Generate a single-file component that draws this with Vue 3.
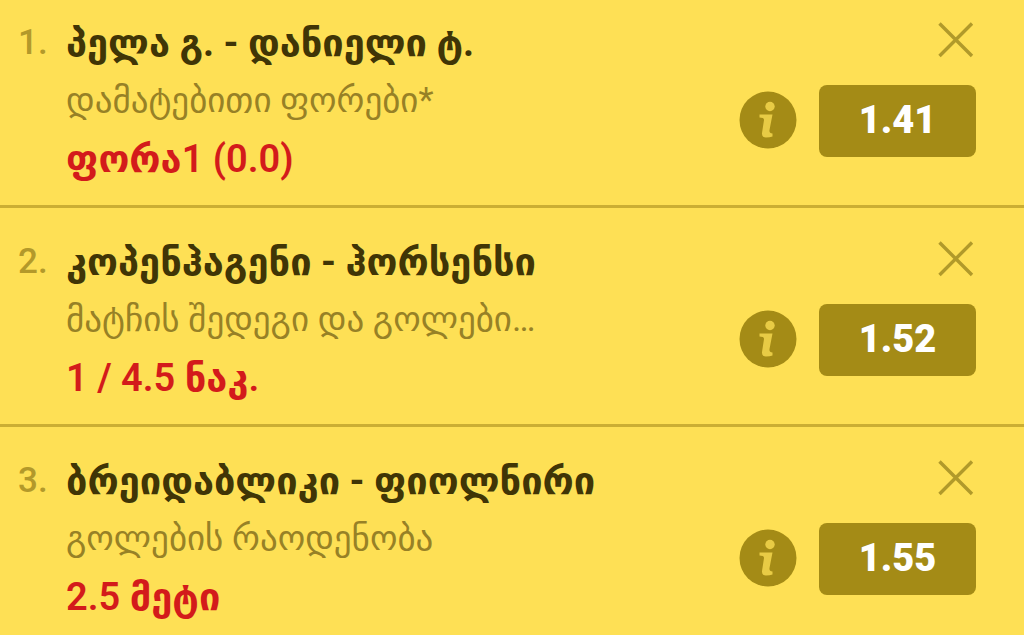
<script setup>
const bets = [
  { title: 'პელა გ. - დანიელი ტ.', market: 'დამატებითი ფორები*', pick: 'ფორა1 (0.0)', odds: '1.41' },
  { title: 'კოპენჰაგენი - ჰორსენსი', market: 'მატჩის შედეგი და გოლები…', pick: '1 / 4.5 ნაკ.', odds: '1.52' },
  { title: 'ბრეიდაბლიკი - ფიოლნირი', market: 'გოლების რაოდენობა', pick: '2.5 მეტი', odds: '1.55' },
]
</script>

<template>
  <ol class="slip">
    <li v-for="(bet, i) in bets" :key="bet.title" class="bet">
      <span class="num">{{ i + 1 }}.</span>
      <div class="info">
        <h2 class="title">{{ bet.title }}</h2>
        <p class="market">{{ bet.market }}</p>
        <p class="pick">{{ bet.pick }}</p>
      </div>
      <div class="side">
        <button class="close" type="button" aria-label="Remove">
          <svg viewBox="0 0 36 36" width="36" height="36"><path d="M1.5 1.5 34 34M34 1.5 1.5 34" fill="none" stroke="#b19a2a" stroke-width="3.4" /></svg>
        </button>
        <div class="actions">
          <button class="about" type="button" aria-label="Info">
            <svg viewBox="0 0 58 58" width="58" height="58">
              <circle cx="29" cy="29" r="28.5" fill="#a48b16" />
              <g fill="#e8cb45">
                <circle cx="31" cy="15.5" r="4.7" />
                <path d="M20.5 23.500H33.500L30.500 39Q30 42.500 33.500 42.500V45.500Q31 46.500 27 46.500Q22.500 46.500 23 42L25 29Q25.300 26.500 20.500 26.500Z" />
              </g>
            </svg>
          </button>
          <button class="odds" type="button">{{ bet.odds }}</button>
        </div>
      </div>
    </li>
  </ol>
</template>

<style>
body { margin: 0; background: #fee055; }
</style>

<style scoped>
.slip { margin: 0; padding: 0; list-style: none; font-family: Roboto, "DejaVu Sans", sans-serif; }
.bet { display: flex; padding: 11px 0 13px; border-bottom: 3px solid #cbae33; }
.bet:first-child { padding-top: 0; }
.bet:last-child { padding-bottom: 0; border-bottom: 0; }
.num { width: 66px; box-sizing: border-box; padding: 23px 0 0 18px; font-size: 35px; line-height: 40px; font-weight: 500; color: #b3992a; }
.info { flex: 1; min-width: 0; white-space: nowrap; }
.title, .market, .pick { margin: 0; height: 58px; line-height: 58px; }
.title { padding-top: 14px; font-size: 38px; font-weight: 700; color: #403506; }
.market { font-size: 35px; color: #978126; }
.pick { height: 62px; font-size: 38px; font-weight: 600; color: #d31b1b; }
.side { display: flex; flex-direction: column; align-items: flex-end; padding: 22px 48px 0 0; }
button { border: 0; padding: 0; background: none; font: inherit; cursor: pointer; }
svg { display: block; }
.close { margin-right: 2px; }
.actions { display: flex; align-items: center; gap: 22px; margin-top: 27px; }
.about { padding-bottom: 3px; }
.odds { width: 157px; height: 72px; padding-bottom: 2px; border-radius: 8px; background: #a48b16; color: #fff; font-size: 38px; font-weight: 900; }
</style>
